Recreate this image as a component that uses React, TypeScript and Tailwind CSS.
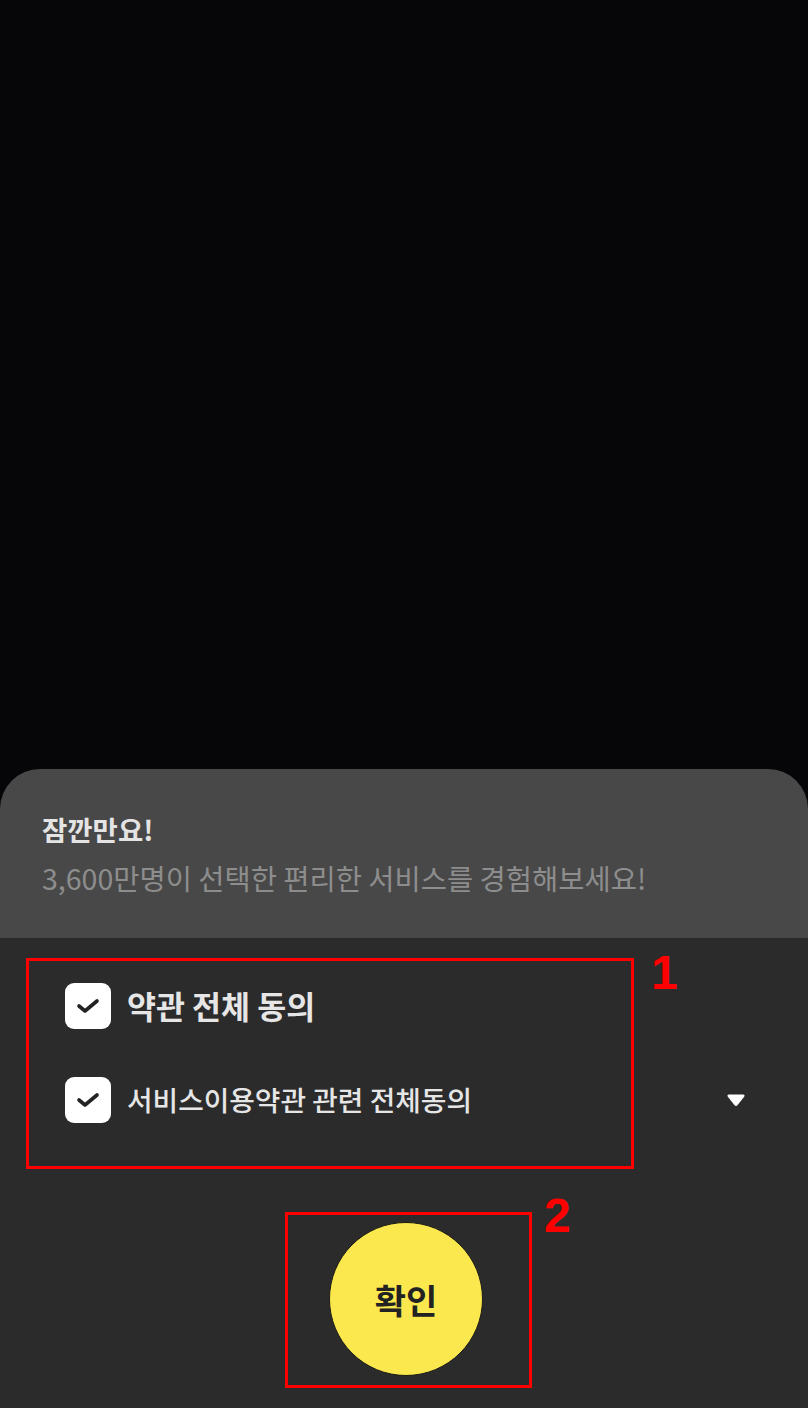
import React from 'react';

const KR = { fontFamily: '"Noto Sans CJK KR", "Noto Sans", sans-serif' };

const CheckBox = () => (
    <div className="flex h-[46px] w-[46px] shrink-0 items-center justify-center rounded-[9px] bg-white">
        <svg width="24" height="16" viewBox="0 0 24 16" fill="none">
            <path
                d="M3 8 L9 13 L21 3"
                stroke="#232323"
                strokeWidth="3.6"
                strokeLinecap="round"
                strokeLinejoin="round"
            />
        </svg>
    </div>
);

const App = () => {
    return (
        <div className="flex min-h-[1408px] w-full flex-col bg-[#060608]" style={KR}>
            <div className="h-[769px] shrink-0" />

            <div className="flex flex-col overflow-hidden rounded-t-[40px] bg-[#484848]">
                {/* header */}
                <div className="flex h-[169px] flex-col px-[42px] pt-[43px]">
                    <p className="text-[27.5px] font-bold leading-[34px] text-[#e4e4e4]">잠깐만요!</p>
                    <p className="mt-[14px] text-[28.5px] leading-[36px] text-[#8d8d8d]">
                        3,600만명이 선택한 편리한 서비스를 경험해보세요!
                    </p>
                </div>

                {/* body */}
                <div className="relative flex h-[470px] flex-col bg-[#2b2b2b] pt-[45px]">
                    <div className="flex h-[46px] items-center gap-[16px] pl-[65px]">
                        <CheckBox />
                        <span className="text-[31.5px] font-bold text-[#e6e6e6]">약관 전체 동의</span>
                    </div>

                    <div className="mt-[48px] flex h-[46px] items-center justify-between pl-[65px] pr-[62px]">
                        <div className="flex items-center gap-[16px]">
                            <CheckBox />
                            <span className="text-[27.8px] font-medium text-[#e6e6e6]">
                                서비스이용약관 관련 전체동의
                            </span>
                        </div>
                        <svg width="20" height="14" viewBox="0 0 20 14">
                            <path
                                d="M3 1.5 H17 Q19.5 1.5 18 4 L11.6 12 Q10 13.8 8.4 12 L2 4 Q0.5 1.5 3 1.5 Z"
                                fill="#ffffff"
                            />
                        </svg>
                    </div>

                    <div className="mt-[99px] flex justify-center pl-[4px]">
                        <button className="flex h-[154px] w-[154px] items-center justify-center rounded-full border border-[#1c1c14] bg-[#fbe84f]">
                            <span className="text-[34px] font-bold text-[#222222]">확인</span>
                        </button>
                    </div>

                    {/* annotations */}
                    <div className="absolute left-[26px] top-[20px] h-[211px] w-[608px] border-[3px] border-[#ff0000]" />
                    <span
                        className="absolute left-[651px] top-[11px] text-[48px] font-bold leading-none text-[#ff0000]"
                        style={{ fontFamily: '"Liberation Sans", Arial, sans-serif' }}
                    >
                        1
                    </span>
                    <div className="absolute left-[285px] top-[274px] h-[176px] w-[247px] border-[3px] border-[#ff0000]" />
                    <span
                        className="absolute left-[544px] top-[254px] text-[48px] font-bold leading-none text-[#ff0000]"
                        style={{ fontFamily: '"Liberation Sans", Arial, sans-serif' }}
                    >
                        2
                    </span>
                </div>
            </div>
        </div>
    );
};

export default App;
